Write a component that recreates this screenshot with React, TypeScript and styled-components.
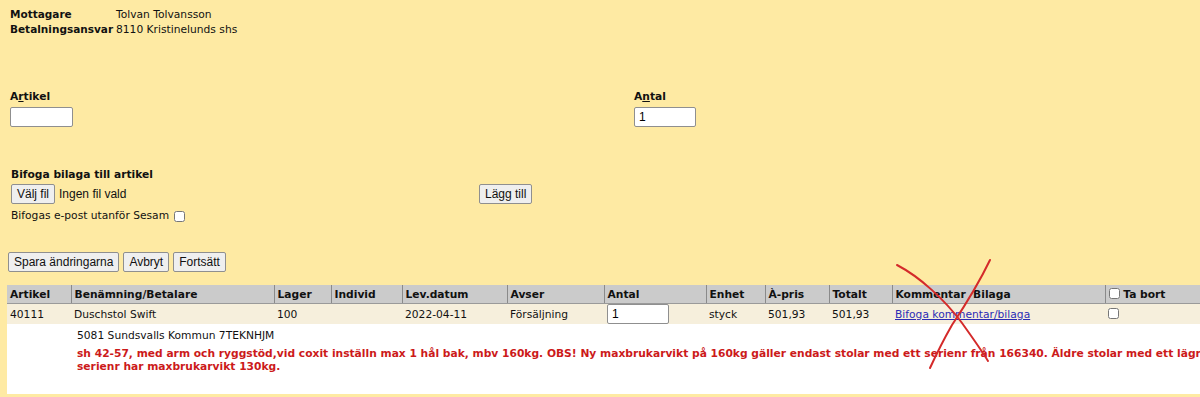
import styled, { createGlobalStyle } from 'styled-components'

const GlobalStyle = createGlobalStyle`
  html, body {
    margin: 0;
    padding: 0;
    background: #feeaa3;
    overflow: hidden;
  }
  body {
    font-family: "DejaVu Sans", Verdana, sans-serif;
    font-size: 10.7px;
    color: #111;
  }
`

const columns = [
  { title: 'Artikel', width: 64 },
  { title: 'Benämning/Betalare', width: 203 },
  { title: 'Lager', width: 57 },
  { title: 'Individ', width: 71 },
  { title: 'Lev.datum', width: 105 },
  { title: 'Avser', width: 97 },
  { title: 'Antal', width: 102 },
  { title: 'Enhet', width: 59 },
  { title: 'À-pris', width: 64 },
  { title: 'Totalt', width: 63 },
  { title: 'Kommentar/Bilaga', width: 213 },
  { title: 'Ta bort', width: 120 }
]

export default function App() {
  return (
    <Page>
      <GlobalStyle />
      <InfoGrid>
        <InfoKey>Mottagare</InfoKey>
        <span>Tolvan Tolvansson</span>
        <InfoKey>Betalningsansvar</InfoKey>
        <span>8110 Kristinelunds shs</span>
      </InfoGrid>

      <FieldRow>
        <Field>
          <Label>
            A<u>r</u>tikel
          </Label>
          <TextInput width={63} />
        </Field>
        <Field>
          <Label>
            A<u>n</u>tal
          </Label>
          <TextInput width={62} defaultValue="1" />
        </Field>
      </FieldRow>

      <AttachSection>
        <Label>Bifoga bilaga till artikel</Label>
        <AttachRow>
          <FileArea>
            <Button type="button">Välj fil</Button>
            <FileName>Ingen fil vald</FileName>
          </FileArea>
          <Button type="button">Lägg till</Button>
        </AttachRow>
        <CheckLine>
          Bifogas e-post utanför Sesam <Check type="checkbox" />
        </CheckLine>
      </AttachSection>

      <ActionRow>
        <Button type="button">Spara ändringarna</Button>
        <Button type="button">Avbryt</Button>
        <Button type="button">Fortsätt</Button>
      </ActionRow>

      <Table>
        <colgroup>
          {columns.map((c) => (
            <col key={c.title} style={{ width: c.width }} />
          ))}
        </colgroup>
        <thead>
          <tr>
            {columns.map((c, i) => (
              <HeadCell key={c.title} first={i === 0}>
                {c.title === 'Ta bort' ? (
                  <>
                    <Check type="checkbox" /> Ta bort
                  </>
                ) : c.title === 'Kommentar/Bilaga' ? (
                  'Kommentar  Bilaga'
                ) : (
                  c.title
                )}
              </HeadCell>
            ))}
          </tr>
        </thead>
        <tbody>
          <DataRow>
            <Cell>40111</Cell>
            <Cell>Duschstol Swift</Cell>
            <Cell>100</Cell>
            <Cell></Cell>
            <Cell>2022-04-11</Cell>
            <Cell>Försäljning</Cell>
            <Cell>
              <TextInput width={62} defaultValue="1" />
            </Cell>
            <Cell>styck</Cell>
            <Cell>501,93</Cell>
            <Cell>501,93</Cell>
            <Cell>
              <Link href="#">Bifoga kommentar/bilaga</Link>
            </Cell>
            <Cell>
              <Check type="checkbox" />
            </Cell>
          </DataRow>
          <DetailRow>
            <td />
            <DetailCell colSpan={11}>
              <Payer>5081 Sundsvalls Kommun 7TEKNHJM</Payer>
              <Note>
                sh 42-57, med arm och ryggstöd,vid coxit inställn max 1 hål bak, mbv 160kg. OBS! Ny
                maxbrukarvikt på 160kg gäller endast stolar med ett serienr från 166340. Äldre stolar
                med ett lägre serienr har maxbrukarvikt 130kg.
              </Note>
            </DetailCell>
          </DetailRow>
        </tbody>
      </Table>

      <Scribble viewBox="0 0 110 120" width={110} height={120}>
        <path
          d="M7 10 C 30 22, 55 45, 72 68 C 82 82, 92 96, 98 106"
          stroke="#d42a2a"
          strokeWidth={2}
          fill="none"
          strokeLinecap="round"
        />
        <path
          d="M100 5 C 88 30, 72 55, 62 70 C 54 84, 46 100, 40 113"
          stroke="#d42a2a"
          strokeWidth={2}
          fill="none"
          strokeLinecap="round"
        />
      </Scribble>
    </Page>
  )
}

const Page = styled.div`
  position: relative;
  height: 397px;
  padding-top: 7px;
  box-sizing: border-box;
`

const InfoGrid = styled.div`
  display: grid;
  grid-template-columns: 106px auto;
  justify-content: start;
  line-height: 15px;
  padding-left: 10px;
`

const InfoKey = styled.span`
  font-weight: bold;
  font-size: 10.5px;
`

const FieldRow = styled.div`
  display: grid;
  grid-template-columns: 624px auto;
  padding-left: 10px;
  margin-top: 53px;
`

const Field = styled.div`
  display: flex;
  flex-direction: column;
  align-items: flex-start;
  gap: 3px;
`

const Label = styled.span`
  font-weight: bold;
  line-height: 14px;
`

const TextInput = styled.input<{ width: number }>`
  width: ${(p) => p.width}px;
  height: 20px;
  box-sizing: border-box;
  border: 1px solid #8f8f8f;
  border-radius: 2px;
  padding: 1px 4px;
  font: 12px "Liberation Sans", Arial, sans-serif;
  background: #fff;
`

const AttachSection = styled.div`
  display: flex;
  flex-direction: column;
  padding-left: 11px;
  margin-top: 41px;
`

const AttachRow = styled.div`
  display: grid;
  grid-template-columns: 468px auto;
  justify-content: start;
  margin-top: 2px;
`

const FileArea = styled.div`
  display: flex;
  align-items: center;
  gap: 4px;
`

const FileName = styled.span`
  font: 12px "Liberation Sans", Arial, sans-serif;
`

const Button = styled.button`
  height: 20px;
  padding: 0 5px;
  border: 1px solid #8f8f8f;
  border-radius: 2px;
  background: #efefef;
  color: #111;
  font: 12px "Liberation Sans", Arial, sans-serif;
`

const CheckLine = styled.label`
  display: flex;
  align-items: center;
  gap: 5px;
  margin-top: 5px;
  line-height: 14px;
`

const Check = styled.input`
  width: 11px;
  height: 11px;
  margin: 0;
  vertical-align: -1px;
`

const ActionRow = styled.div`
  display: flex;
  gap: 4px;
  padding-left: 8px;
  margin-top: 29px;
`

const Table = styled.table`
  border-collapse: collapse;
  table-layout: fixed;
  width: 1218px;
  margin: 13px 0 0 7px;
`

const HeadCell = styled.th<{ first?: boolean }>`
  background: #cbcbcb;
  border-left: ${(p) => (p.first ? 'none' : '1px solid #8a8a8a')};
  border-bottom: 1px solid #9a9a9a;
  text-align: left;
  padding: 0 3px;
  height: 18px;
  font-size: 10.7px;
  white-space: pre;
  overflow: hidden;
`

const DataRow = styled.tr`
  background: #f6efdc;
`

const Cell = styled.td`
  padding: 0 3px;
  height: 20px;
  white-space: nowrap;
  overflow: hidden;
`

const DetailRow = styled.tr`
  background: #fff;
`

const DetailCell = styled.td`
  padding: 4px 6px 21px;
  vertical-align: top;
`

const Payer = styled.div`
  line-height: 15px;
  margin-bottom: 4px;
`

const Note = styled.div`
  color: #cc1a1a;
  font-weight: bold;
  line-height: 13px;
`

const Link = styled.a`
  color: #2b2bb5;
`

const Scribble = styled.svg`
  position: absolute;
  left: 890px;
  top: 255px;
  pointer-events: none;
`
